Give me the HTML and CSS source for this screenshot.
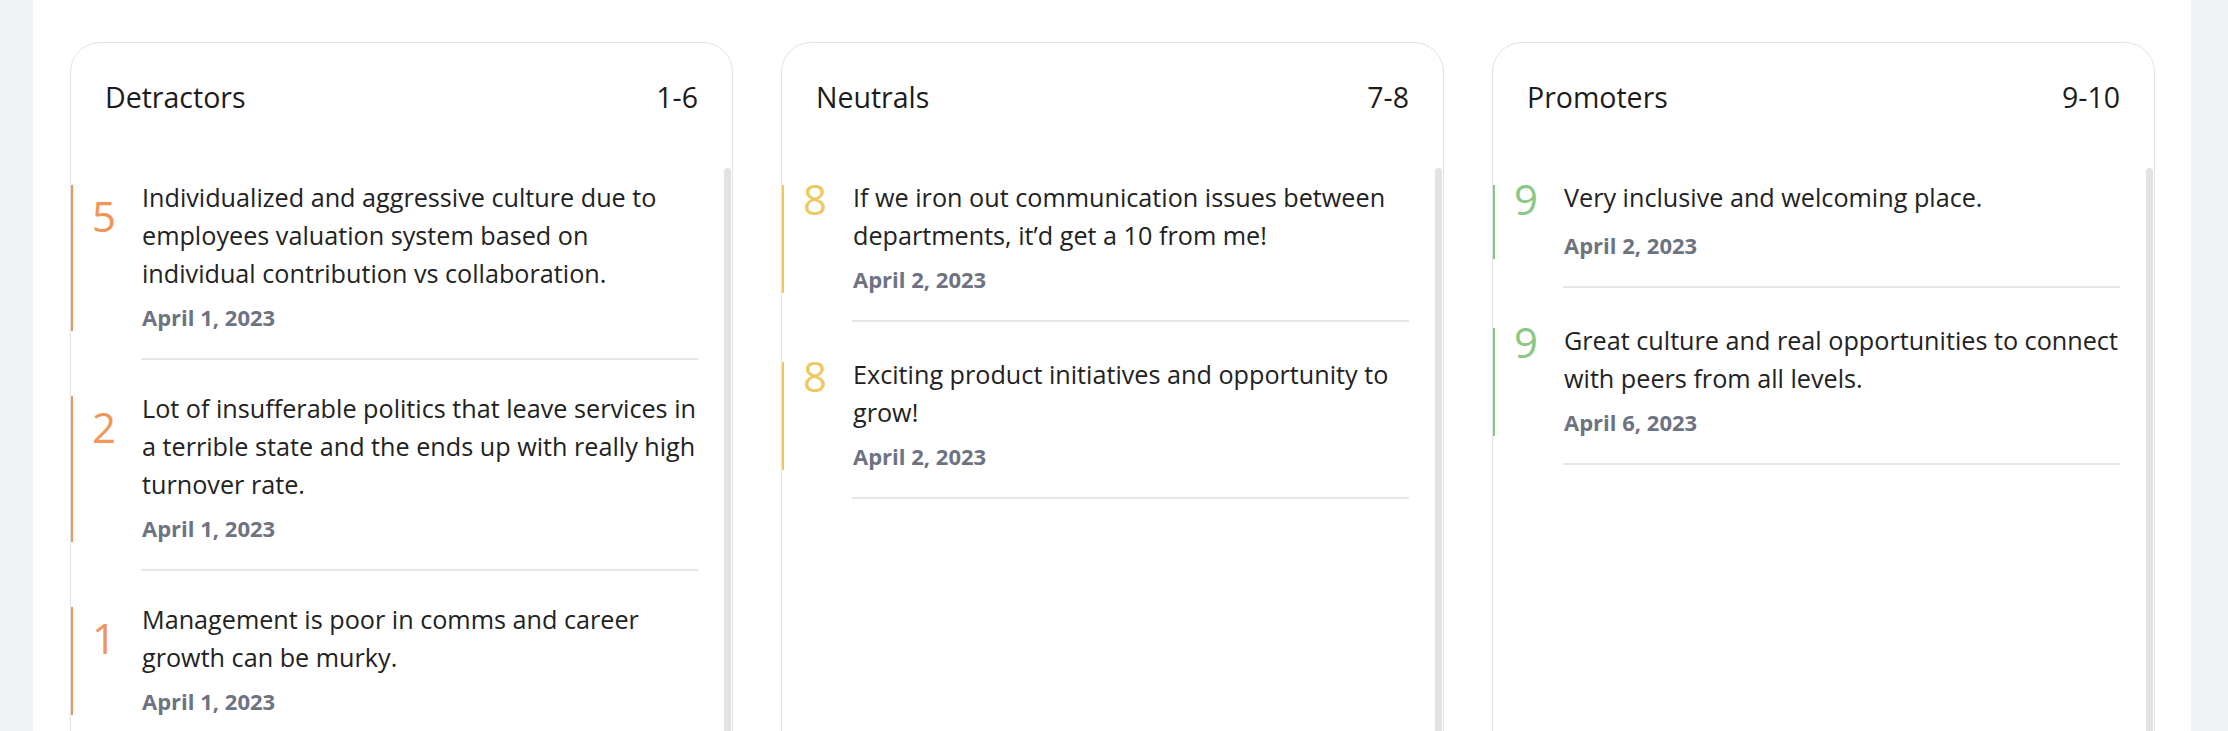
FILE: index.html
```html
<!DOCTYPE html>
<html lang="en">
<head>
    <meta charset="UTF-8">
    <meta name="viewport" content="width=device-width, initial-scale=1.0">
    <title>NPS comments</title>
    <link rel="stylesheet" href="styles.css">
</head>
<body>
    <main class="panel">
        <section class="card card-detractors">
            <div class="card-head">
                <h2>Detractors</h2>
                <span class="range">1-6</span>
            </div>
            <div class="card-body">
                <ul class="review-list">
                    <li class="review">
                        <div class="review-main">
                            <span class="score">5</span>
                            <div class="review-body">
                                <p>Individualized and aggressive culture due to employees valuation system based on individual contribution vs collaboration.</p>
                                <span class="date">April 1, 2023</span>
                            </div>
                        </div>
                        <div class="review-line"></div>
                    </li>
                    <li class="review">
                        <div class="review-main">
                            <span class="score">2</span>
                            <div class="review-body">
                                <p>Lot of insufferable politics that leave services in a terrible state and the ends up with really high turnover rate.</p>
                                <span class="date">April 1, 2023</span>
                            </div>
                        </div>
                        <div class="review-line"></div>
                    </li>
                    <li class="review">
                        <div class="review-main">
                            <span class="score">1</span>
                            <div class="review-body">
                                <p>Management is poor in comms and career growth can be murky.</p>
                                <span class="date">April 1, 2023</span>
                            </div>
                        </div>
                        <div class="review-line"></div>
                    </li>
                </ul>
                <div class="scroll-thumb"></div>
            </div>
        </section>

        <section class="card card-neutrals">
            <div class="card-head">
                <h2>Neutrals</h2>
                <span class="range">7-8</span>
            </div>
            <div class="card-body">
                <ul class="review-list">
                    <li class="review">
                        <div class="review-main">
                            <span class="score">8</span>
                            <div class="review-body">
                                <p>If we iron out communication issues between departments, it’d get a 10 from me!</p>
                                <span class="date">April 2, 2023</span>
                            </div>
                        </div>
                        <div class="review-line"></div>
                    </li>
                    <li class="review">
                        <div class="review-main">
                            <span class="score">8</span>
                            <div class="review-body">
                                <p>Exciting product initiatives and opportunity to grow!</p>
                                <span class="date">April 2, 2023</span>
                            </div>
                        </div>
                        <div class="review-line"></div>
                    </li>
                </ul>
                <div class="scroll-thumb"></div>
            </div>
        </section>

        <section class="card card-promoters">
            <div class="card-head">
                <h2>Promoters</h2>
                <span class="range">9-10</span>
            </div>
            <div class="card-body">
                <ul class="review-list">
                    <li class="review">
                        <div class="review-main">
                            <span class="score">9</span>
                            <div class="review-body">
                                <p>Very inclusive and welcoming place.</p>
                                <span class="date">April 2, 2023</span>
                            </div>
                        </div>
                        <div class="review-line"></div>
                    </li>
                    <li class="review">
                        <div class="review-main">
                            <span class="score">9</span>
                            <div class="review-body">
                                <p>Great culture and real opportunities to connect with peers from all levels.</p>
                                <span class="date">April 6, 2023</span>
                            </div>
                        </div>
                        <div class="review-line"></div>
                    </li>
                </ul>
                <div class="scroll-thumb"></div>
            </div>
        </section>
    </main>
</body>
</html>
```

FILE: styles.css
```css
* {
    box-sizing: border-box;
}
html, body {
    height: 100%;
    overflow: hidden;
}
body {
    margin: 0;
    padding: 0 37px 0 33px;
    background: #eef2f5;
    font-family: "Open Sans", "Noto Sans", sans-serif;
    color: #222;
}

.panel {
    background: #fff;
    min-height: 900px;
    padding: 42px 36px 0 37px;
    display: grid;
    grid-template-columns: repeat(3, 1fr);
    gap: 48px;
    align-items: start;
}

.card {
    height: 820px;
    border: 1px solid #e2e2e2;
    border-radius: 30px;
    display: flex;
    flex-direction: column;
    overflow: hidden;
}

.card-head {
    display: flex;
    justify-content: space-between;
    align-items: center;
    padding: 35px 34px 52px 34px;
}

.card-head h2,
.card-head .range {
    margin: 0;
    font-size: 28.5px;
    font-weight: 400;
    line-height: 38px;
    color: #1c1c1c;
}

.card-body {
    flex: 1;
    display: flex;
}

.review-list {
    flex: 1;
    list-style: none;
    margin: 0;
    padding: 17px 0 0 0;
}

.review + .review {
    margin-top: 40px;
}
.card-detractors .review + .review {
    margin-top: 36px;
}

.review-main {
    display: flex;
    min-height: 74px;
    margin-left: -2px;
    padding: 0 21px 0 19px;
    border-left: 4px solid #f1965a;
}

.score {
    width: 50px;
    flex-shrink: 0;
    align-self: flex-start;
    margin-top: -7px;
    font-size: 42px;
    font-weight: 500;
    line-height: 42px;
    color: #f1965a;
}

.card-detractors .score {
    margin-top: 10px;
}

.review-body {
    flex: 1;
    display: flex;
    flex-direction: column;
    margin-top: -7px;
}

.review-body p {
    margin: 0 0 11px 0;
    font-size: 25.2px;
    line-height: 38px;
    color: #222;
}

.date {
    display: block;
    margin-top: auto;
    font-size: 22px;
    font-weight: 700;
    line-height: 28px;
    color: #6e7382;
}

.review-line {
    height: 2px;
    margin: 27px 26px 0 70px;
    background: #e6e6e6;
}

.scroll-thumb {
    width: 7px;
    margin-right: 1px;
    border-radius: 4px;
    background: #e3e3e3;
}

.card-neutrals .review-main {
    border-left-color: #eec95f;
}
.card-neutrals .score {
    color: #eec95f;
}

.card-promoters .review-main {
    border-left-color: #8bc785;
}
.card-promoters .score {
    color: #8bc785;
}
```
